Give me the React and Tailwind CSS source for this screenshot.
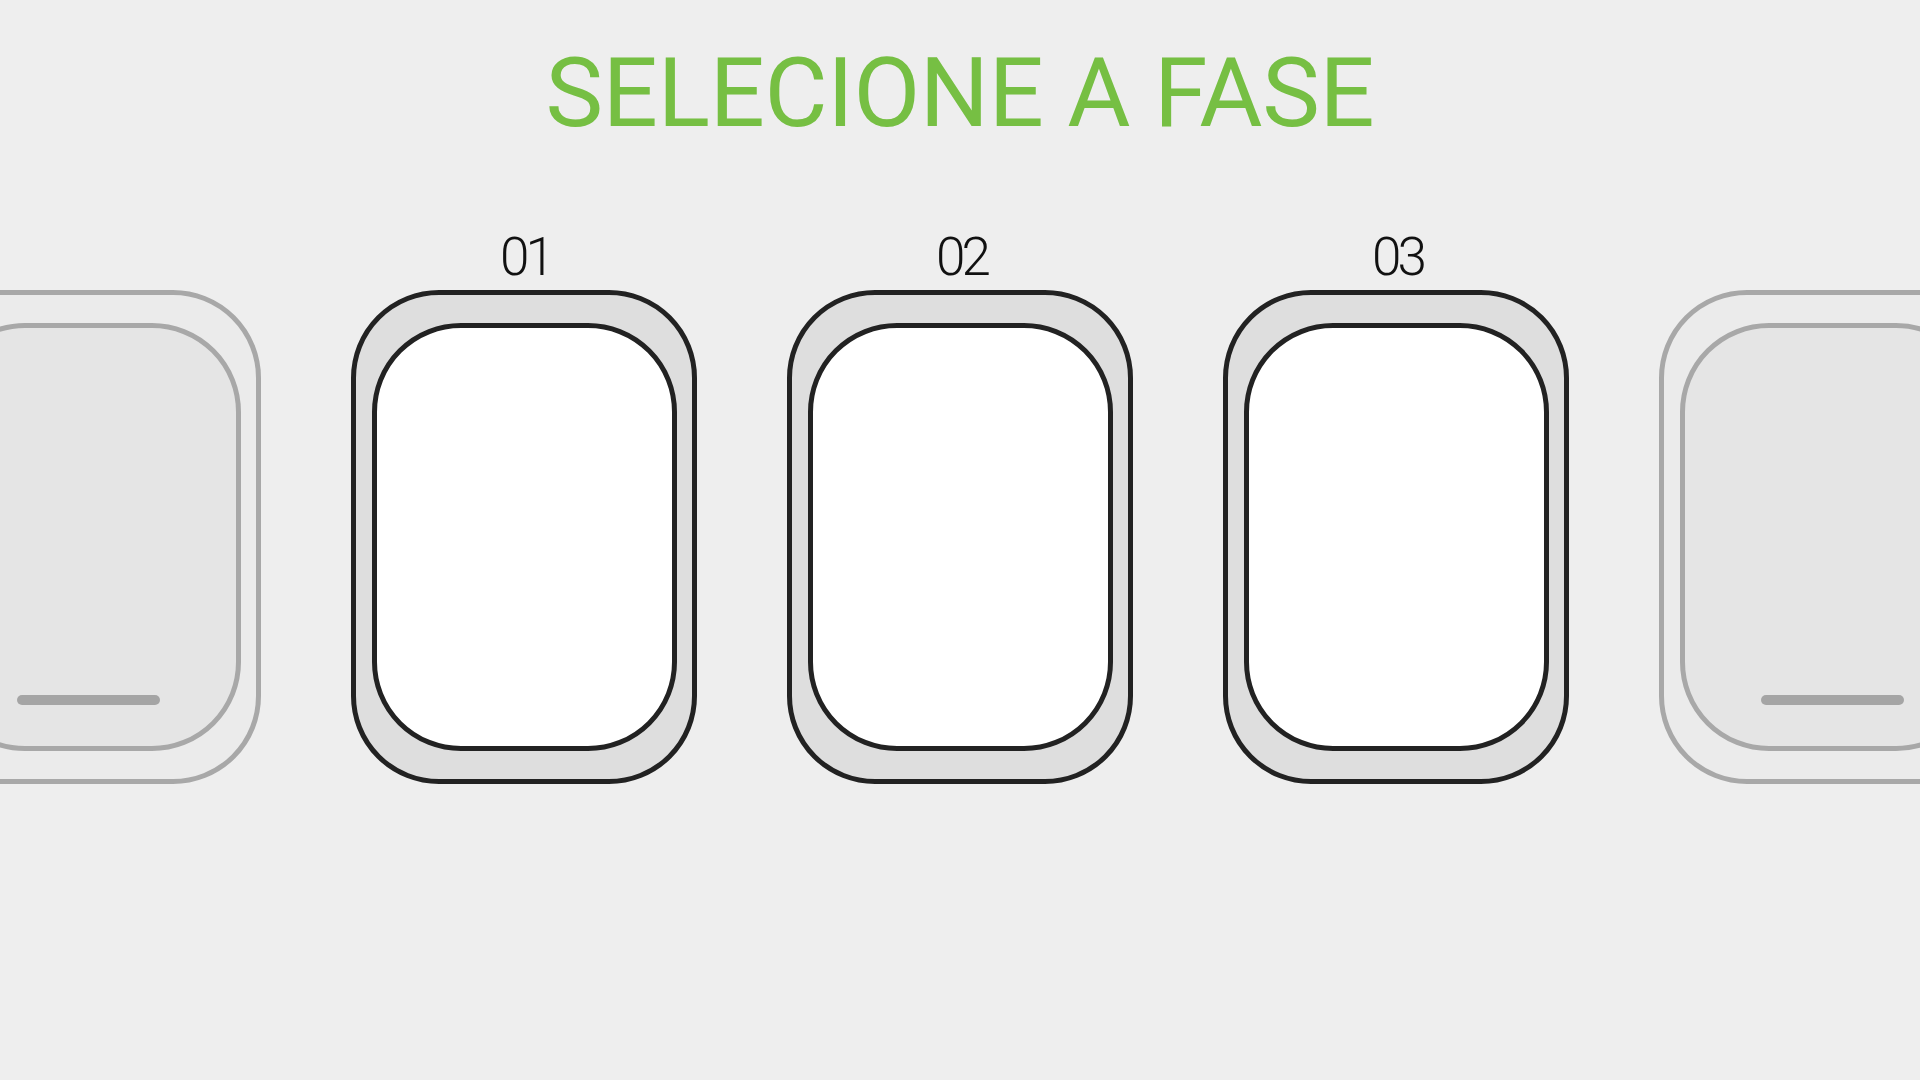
import React from "react";

function ActiveCard({ label }) {
  return (
    <div className="flex flex-col items-center shrink-0">
      <div className="h-[53px] flex items-end justify-center">
        <div className="text-[53px] leading-none font-light text-[#111111] tracking-[-4px] pl-[3px]" style={{ fontFamily: "Roboto, 'Liberation Sans', sans-serif" }}>
          {label}
        </div>
      </div>
      <div className="mt-[6px] w-[346px] h-[494px] rounded-[88px] border-[5px] border-[#222222] bg-[#dedede] flex items-center justify-center">
        <div className="w-[305px] h-[428px] rounded-[89px] border-[5px] border-[#222222] bg-white" />
      </div>
    </div>
  );
}

function GhostCard() {
  return (
    <div className="flex flex-col items-center shrink-0">
      <div className="h-[53px]" />
      <div className="mt-[6px] w-[346px] h-[494px] rounded-[88px] border-[5px] border-[#a8a8a8] bg-[#ebebeb] flex items-center justify-center">
        <div className="w-[305px] h-[428px] rounded-[89px] border-[5px] border-[#a8a8a8] bg-[#e5e5e5] flex flex-col items-center justify-end pb-[41px]">
          <div className="w-[143px] h-[10px] rounded-full bg-[#a5a5a5]" />
        </div>
      </div>
    </div>
  );
}

export default function App() {
  return (
    <div className="w-full h-[1080px] bg-[#eeeeee] overflow-hidden flex flex-col items-center">
      <h1
        className="pt-[45px] text-[97px] leading-none font-normal text-[#76bf43] tracking-[-0.3px] whitespace-nowrap"
        style={{ fontFamily: "Roboto, 'Liberation Sans', sans-serif" }}
      >
        SELECIONE A FASE
      </h1>
      <div className="w-full mt-[89px] flex justify-center gap-[90px]">
        <GhostCard />
        <ActiveCard label="01" />
        <ActiveCard label="02" />
        <ActiveCard label="03" />
        <GhostCard />
      </div>
    </div>
  );
}
